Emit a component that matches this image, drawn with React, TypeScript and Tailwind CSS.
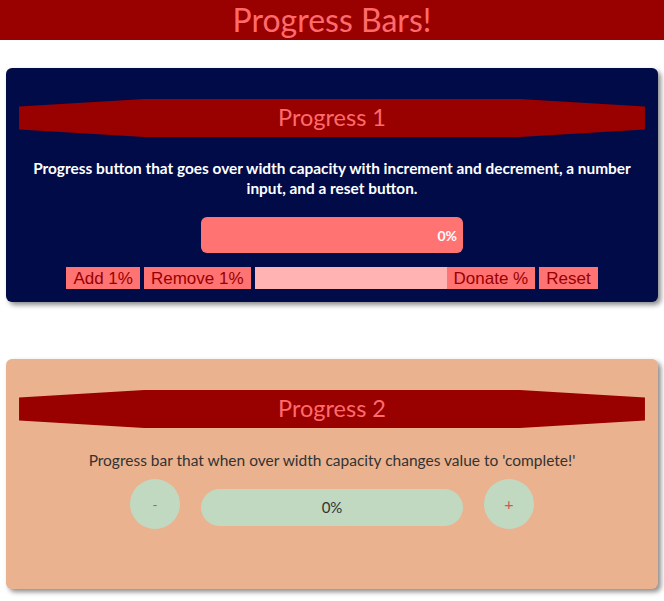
import React, { useState } from 'react';

const font = { fontFamily: 'Lato, "Open Sans", sans-serif' };

const Banner = ({ title }: { title: string }) => (
  <div
    className="mx-auto w-[96%] h-[38px] bg-[#990000] flex items-center justify-center [clip-path:polygon(0_20%,20%_0,80%_0,100%_20%,100%_80%,80%_100%,20%_100%,0_80%)]"
  >
    <h2 className="text-[23.5px] text-[#ff6b6b] leading-none">{title}</h2>
  </div>
);

export default function App() {
  const [p1, setP1] = useState(0);
  const [p2, setP2] = useState(0);
  const [donate, setDonate] = useState('');

  return (
    <div className="min-h-screen bg-white" style={font}>
      <header className="h-10 bg-[#990000] flex items-center justify-center">
        <h1 className="text-[32px] text-[#ff6b6b] leading-none">Progress Bars!</h1>
      </header>

      {/* Progress 1 */}
      <section className="mx-[6px] mt-7 rounded-md bg-[#000b47] pt-[31px] pb-[13px] shadow-[3px_3px_5px_rgba(0,0,0,0.45)]">
        <Banner title="Progress 1" />
        <p className="mt-[21px] px-6 text-center text-[15.4px] leading-5 font-bold text-white">
          Progress button that goes over width capacity with increment and decrement, a number input, and a reset button.
        </p>
        <div className="mx-auto mt-[19px] w-[262px] h-9 rounded-md bg-[#ff7373] flex items-center justify-end pr-[6px]">
          <span className="text-[14px] font-bold text-white">{p1}%</span>
        </div>
        <div
          className="mt-[14px] flex justify-center gap-1 text-[17px] text-[#990000]"
          style={{ fontFamily: '"Liberation Sans", Arial, sans-serif' }}
        >
          <button onClick={() => setP1(p1 + 1)} className="h-[22px] px-[7px] bg-[#ff7373] leading-none">Add 1%</button>
          <button onClick={() => setP1(Math.max(0, p1 - 1))} className="h-[22px] px-[7px] bg-[#ff7373] leading-none">Remove 1%</button>
          <div className="flex">
            <input
              value={donate}
              onChange={(e) => setDonate(e.target.value)}
              className="w-[192px] h-[22px] bg-[#ffb3b3] outline-none px-1"
            />
            <button
              onClick={() => setP1(p1 + (Number(donate) || 0))}
              className="h-[22px] px-[7px] bg-[#ff7373] leading-none"
            >
              Donate %
            </button>
          </div>
          <button onClick={() => setP1(0)} className="h-[22px] px-[7px] bg-[#ff7373] leading-none">Reset</button>
        </div>
      </section>

      {/* Progress 2 */}
      <section className="mx-[6px] mt-[57px] rounded-md bg-[#ebb28f] pt-[31px] pb-[60px] shadow-[3px_3px_5px_rgba(0,0,0,0.45)]">
        <Banner title="Progress 2" />
        <p className="mt-[22px] px-6 text-center text-[15.5px] leading-5 text-[#333]">
          Progress bar that when over width capacity changes value to 'complete!'
        </p>
        <div className="mt-[9px] flex justify-center items-start gap-[21px]">
          <button
            onClick={() => setP2(Math.max(0, p2 - 1))}
            className="w-[50px] h-[50px] rounded-full bg-[#c1d8c1] text-[#e05050] text-[14px]"
          >
            -
          </button>
          <div className="mt-[10px] w-[262px] h-[37px] rounded-full bg-[#c1d8c1] flex items-center justify-center">
            <span className="text-[15px] text-[#333]">{p2 > 100 ? 'complete!' : `${p2}%`}</span>
          </div>
          <button
            onClick={() => setP2(p2 + 1)}
            className="w-[50px] h-[50px] rounded-full bg-[#c1d8c1] text-[#e05050] text-[16px]"
          >
            +
          </button>
        </div>
      </section>
    </div>
  );
}
